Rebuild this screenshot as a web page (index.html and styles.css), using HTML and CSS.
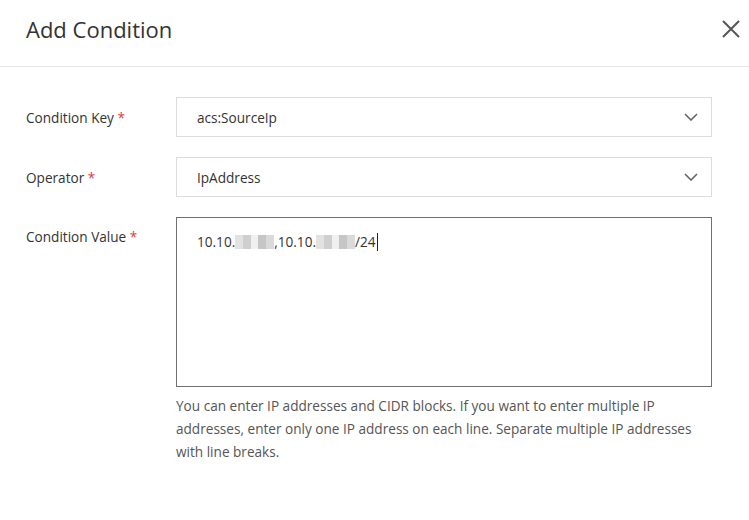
FILE: index.html
```html
<!DOCTYPE html>
<html lang="en">
<head>
<meta charset="utf-8">
<title>Add Condition</title>
<link rel="stylesheet" href="styles.css">
</head>
<body>
<div class="dialog">
  <header class="dialog-header">
    <h1 class="dialog-title">Add Condition</h1>
    <button class="close-btn" aria-label="Close">
      <svg width="18" height="18" viewBox="0 0 18 18"><path d="M1 1 L17 17 M17 1 L1 17" stroke="#555" stroke-width="2" fill="none"/></svg>
    </button>
  </header>
  <div class="dialog-body">
    <div class="form-row">
      <label class="form-label">Condition Key <span class="req">*</span></label>
      <div class="select">
        <span class="select-value">acs:SourceIp</span>
        <svg class="chevron" width="14" height="8" viewBox="0 0 14 8"><path d="M1 1 L7 7 L13 1" stroke="#666" stroke-width="1.6" fill="none"/></svg>
      </div>
    </div>
    <div class="form-row">
      <label class="form-label">Operator <span class="req">*</span></label>
      <div class="select">
        <span class="select-value">IpAddress</span>
        <svg class="chevron" width="14" height="8" viewBox="0 0 14 8"><path d="M1 1 L7 7 L13 1" stroke="#666" stroke-width="1.6" fill="none"/></svg>
      </div>
    </div>
    <div class="form-row top">
      <label class="form-label">Condition Value <span class="req">*</span></label>
      <div class="field-col">
        <div class="textarea">10.10.<span class="mask"></span>,10.10.<span class="mask"></span>/24<span class="caret"></span></div>
        <p class="help">You can enter IP addresses and CIDR blocks. If you want to enter multiple IP addresses, enter only one IP address on each line. Separate multiple IP addresses with line breaks.</p>
      </div>
    </div>
  </div>
</div>
</body>
</html>
```

FILE: styles.css
```css
* { box-sizing: border-box; }
html, body { margin: 0; padding: 0; background: #fff; }
body { font-family: "Open Sans", "Noto Sans", sans-serif; color: #333; width: 749px; height: 520px; overflow: hidden; }

.dialog { width: 749px; }

.dialog-header {
  display: flex;
  align-items: center;
  justify-content: space-between;
  height: 67px;
  padding: 0 9px 0 26px;
  border-bottom: 1px solid #e6e6e6;
}
.dialog-title {
  margin: 0;
  font-size: 22px;
  font-weight: 400;
  color: #333;
  padding-bottom: 8px;
}
.close-btn {
  border: 0;
  background: none;
  padding: 0;
  width: 18px;
  height: 18px;
  margin-bottom: 8px;
  display: flex;
}

.dialog-body {
  padding: 30px 37px 0 26px;
}

.form-row {
  display: flex;
  align-items: center;
  margin-bottom: 20px;
}
.form-row.top { align-items: flex-start; }

.form-label {
  width: 150px;
  flex: none;
  font-size: 13.6px;
  color: #333;
}
.form-row.top .form-label { padding-top: 10px; }
.req { color: #e4393c; }

.select {
  flex: 1;
  height: 40px;
  border: 1px solid #dcdcdc;
  display: flex;
  align-items: center;
  justify-content: space-between;
  padding: 0 13px 0 20px;
  font-size: 13.6px;
  color: #333;
}
.chevron { display: block; }

.field-col { flex: 1; }
.textarea {
  height: 170px;
  border: 1px solid #707070;
  padding: 14px 20px;
  font-size: 13.6px;
  color: #333;
  line-height: 20px;
}
.mask {
  display: inline-block;
  width: 39px;
  height: 14px;
  vertical-align: -2px;
  background:
    linear-gradient(90deg, #e2e2e2 0 8px, #cfcfcf 8px 16px, #f0f0f0 16px 23px, #c6c6c6 23px 31px, #dadada 31px 39px);
}
.caret {
  display: inline-block;
  width: 1px;
  height: 18px;
  background: #222;
  vertical-align: -4px;
  margin-left: 1px;
}
.help {
  margin: 7px 0 0;
  font-size: 13.6px;
  line-height: 23px;
  color: #555;
}
```
